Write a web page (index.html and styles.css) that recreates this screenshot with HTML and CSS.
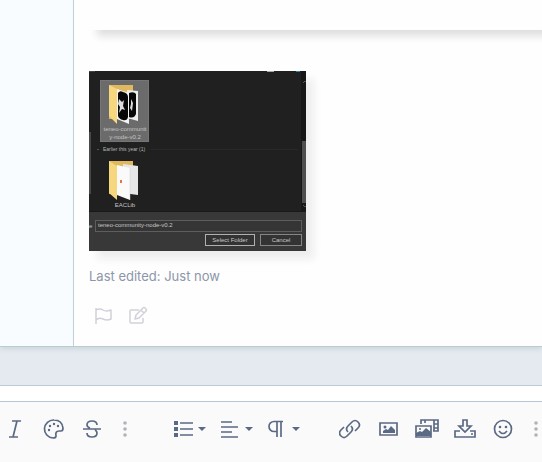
FILE: index.html
```html
<!DOCTYPE html>
<html lang="en">
<head>
<meta charset="utf-8">
<title>Forum thread</title>
<link rel="stylesheet" href="styles.css">
</head>
<body>
<main>
  <article class="post">
    <aside class="post-author"></aside>
    <div class="post-body">
      <div class="attachment attachment-blank"></div>
      <svg class="attachment attachment-dialog" viewBox="0 0 217 180" role="img" aria-label="Select folder dialog">
        <rect width="217" height="180" fill="#202020"/>
        <path d="M0 .5h6" stroke="#444"/>
        <path d="M178 .5h7" stroke="#aaa"/>
        <path d="M207 .5h4" stroke="#2785a8"/>
        <rect y="61" width="2" height="62" fill="#484848"/>
        <rect x="212" width="5" height="140" fill="#171717"/>
        <rect x="213" y="70" width="4" height="62" fill="#4e4e4e"/>
        <path d="M214 12l2-2 1 1M214 134l2 2 1-1" fill="none" stroke="#555"/>
        <rect x="11.500" y="9.500" width="48" height="61" fill="#6b6b6b" stroke="#767676"/>
        <path d="M20 14h24v34H20z" fill="#dfb85f"/>
        <path d="M38 19l11 1v30l-11-3z" fill="#eee"/>
        <path d="M40 22q5-2 7 1v20q-2 5-7 3z" fill="#080808"/>
        <path d="M28 18l12 4v31l-12-5z" fill="#f4f4f4"/>
        <path d="M29 22q2-3 5-1 5 1 5 5v20q-1 4-5 3-4-1-5-4z" fill="#080808"/>
        <path d="M30 28l3 3 2-2-1 6 2 4-3-1-3 4 1-6-2-3zM42 28l2 4-1 8-2-3 1-4z" fill="#ddd"/>
        <path d="M20 14l8 4v35l-8-8z" fill="#f6d77e"/>
        <g class="caption" text-anchor="middle">
          <text x="36" y="60">teneo-communit</text>
          <text x="36" y="68">y-node-v0.2</text>
          <text x="36" y="136">EACLib</text>
        </g>
        <path d="M8 78l1 1 1-1" fill="none" stroke="#555"/>
        <text class="group-name" x="14" y="80">Earlier this year (1)</text>
        <path d="M62 78.500h147" stroke="#292929"/>
        <path d="M20 90h24v33H20z" fill="#dfb85f"/>
        <path d="M34 93l15 2v29l-15-2z" fill="#e6e6e6"/>
        <path d="M28 94l13 3v32l-13-5z" fill="#fafafa"/>
        <path d="M41 97v32" stroke="#ccc" stroke-width=".500"/>
        <path d="M20 90l8 5v34l-8-7z" fill="#f6d77e"/>
        <path d="M31 109h2v3h-2z" fill="#e4763e"/>
        <rect y="140" width="217" height="40" fill="#383838"/>
        <path d="M0 140.500h217" stroke="#191919"/>
        <text class="field-text" x="0" y="157">e</text>
        <rect x="6.500" y="149.500" width="206" height="11" fill="#353535" stroke="#5e5e5e"/>
        <text class="field-text" x="9" y="156">teneo-community-node-v0.2</text>
        <rect x="116.500" y="163.500" width="49" height="11" fill="#333" stroke="#b0b0b0"/>
        <rect x="171.500" y="163.500" width="41" height="11" fill="#333" stroke="#858585"/>
        <g class="field-text" text-anchor="middle">
          <text x="141" y="171">Select Folder</text>
          <text x="192" y="171">Cancel</text>
        </g>
      </svg>
      <p class="edited">Last edited: Just now</p>
      <div class="post-actions">
        <button type="button" aria-label="Report">
          <svg viewBox="0 0 20 20"><path d="M3 2v16M3 4q4-2 7 0t8 0v9q-4 2-8 0t-7 1"/></svg>
        </button>
        <button type="button" aria-label="Edit">
          <svg viewBox="0 0 20 20"><path d="M11 4H3q-1 0-1 1v11q0 1 1 1h11q1 0 1-1v-4M7 13l1-4 7-7q1-1 2 0l1 1q1 1 0 2l-7 7zM13 4l3 3"/></svg>
        </button>
      </div>
    </div>
  </article>

  <section class="editor" aria-label="Reply">
    <div class="toolbar" role="toolbar" aria-label="Formatting">
      <div class="tools">
        <button class="tool" type="button" aria-label="Italic">
          <svg viewBox="0 0 24 24"><path d="M8 4h9M5 20h9M13 4L9 20"/></svg>
        </button>
        <button class="tool" type="button" aria-label="Text color">
          <svg viewBox="0 0 24 24"><path d="M12 3a9 9 0 0 0-1 18q3 0 3-2-1-5 3-5h2q2 0 2-3-1-8-9-8z"/><g class="solid"><circle cx="7" cy="13" r="1.200"/><circle cx="8" cy="9" r="1.200"/><circle cx="12" cy="7" r="1.200"/><circle cx="16" cy="9" r="1.200"/></g></svg>
        </button>
        <button class="tool" type="button" aria-label="Strike-through">
          <svg viewBox="0 0 24 24"><path d="M3 12h18M17 8q0-4-5-4-5 0-5 4 0 2 3 3M7 16q0 4 5 4 5 0 5-4 0-2-2-3"/></svg>
        </button>
        <button class="tool more" type="button" aria-label="More text options">
          <svg viewBox="0 0 24 24"><circle cx="12" cy="6" r="1.800"/><circle cx="12" cy="12" r="1.800"/><circle cx="12" cy="18" r="1.800"/></svg>
        </button>
      </div>
      <div class="tools">
        <button class="tool menu" type="button" aria-label="List">
          <svg viewBox="0 0 24 24"><path d="M9 6h13M9 12h13M9 18h13"/><path class="solid" d="M3 4h4v4H3zM3 10h4v4H3zM3 16h4v4H3z"/></svg>
          <span class="caret"></span>
        </button>
        <button class="tool menu" type="button" aria-label="Align">
          <svg viewBox="0 0 24 24"><path d="M3 5h11M3 10h17M3 15h11M3 20h17"/></svg>
          <span class="caret"></span>
        </button>
        <button class="tool menu" type="button" aria-label="Paragraph format">
          <svg viewBox="0 0 24 24"><path d="M18 4.500H9a4.500 4.500 0 0 0 0 10h3M12 4v16M16 4v16"/></svg>
          <span class="caret"></span>
        </button>
      </div>
      <div class="tools">
        <button class="tool" type="button" aria-label="Insert link">
          <svg viewBox="0 0 24 24"><path d="M9 15q-3-3 0-6l4-4q3-3 6 0t0 6l-3 3M12 9q3 3 0 6l-4 4q-3 3-6 0t0-6l3-3"/></svg>
        </button>
        <button class="tool" type="button" aria-label="Insert image">
          <svg viewBox="0 0 24 24"><path d="M3 6h17v12H3z"/><path class="solid" d="M6 16v-2l3-2 2 1 3-4 4 4v3z"/><circle class="solid" cx="8" cy="10" r="1.500"/></svg>
        </button>
        <button class="tool" type="button" aria-label="Insert gallery">
          <svg viewBox="0 0 24 24"><path d="M1 9h15v11H1zM6 7V3h17v11h-5M19 3v11M19 7h4M19 11h4M10 3v3"/><path class="solid" d="M1 19v-3l4-2 2 1 4-4 5 4v4z"/><circle class="solid" cx="5" cy="12" r="1"/></svg>
        </button>
        <button class="tool" type="button" aria-label="Insert file">
          <svg viewBox="0 0 24 24"><path d="M10 3h4v6h4l-6 6-6-6h4zM7 14H2v6h20v-6h-5"/><circle class="solid" cx="19" cy="17" r="1"/></svg>
        </button>
        <button class="tool" type="button" aria-label="Smilies">
          <svg viewBox="0 0 24 24"><circle cx="12" cy="12" r="8.500"/><path d="M8 14q4 5 8 0"/><g class="solid"><circle cx="9" cy="10" r="1.300"/><circle cx="15" cy="10" r="1.300"/></g></svg>
        </button>
        <button class="tool more" type="button" aria-label="More insert options">
          <svg viewBox="0 0 24 24"><circle cx="12" cy="6" r="1.800"/><circle cx="12" cy="12" r="1.800"/><circle cx="12" cy="18" r="1.800"/></svg>
        </button>
      </div>
    </div>
  </section>
</main>
</body>
</html>
```
FILE: styles.css
```css
* {
  box-sizing: border-box;
}

body {
  margin: 0;
  background: #e5eaf1;
  font-family: Inter, "Liberation Sans", sans-serif;
  overflow: hidden;
}

main {
  display: flex;
  flex-direction: column;
  gap: 38px;
  min-height: 100vh;
}

button {
  padding: 0;
  border: 0;
  background: none;
  font: inherit;
  color: inherit;
}

svg {
  display: block;
}

.post {
  display: flex;
  background: #fefefe;
  border-bottom: 1px solid #b8cdd1;
  box-shadow: 0 2px 5px #cbd6d8;
}

.post-author {
  flex: 0 0 74px;
  background: #f9fcfe;
  border-right: 1px solid #bdd2d8;
}

.post-body {
  flex: 1;
  min-width: 0;
  padding: 0 0 20px 15px;
}

.attachment {
  box-shadow: 8px 8px 8px #eeeeee;
}

.attachment-blank {
  height: 30px;
  margin-bottom: 41px;
  background: #fefefe;
  box-shadow: 8px 6px 8px #dedede;
}

.attachment-dialog {
  width: 217px;
  height: 180px;
  font-family: "Liberation Sans", sans-serif;
}

.caption {
  font-size: 6px;
  fill: #c4c4c4;
}

.group-name {
  font-size: 5px;
  fill: #b5b5b5;
}

.field-text {
  font-size: 6px;
  fill: #c8c8c8;
}

.edited {
  margin: 15px 0 20px;
  font-size: 13px;
  line-height: 20px;
  color: #8c96a9;
}

.post-actions {
  display: flex;
  gap: 15px;
  padding-left: 4px;
}

.post-actions svg {
  width: 20px;
  height: 20px;
  fill: none;
  stroke: #cfd2d8;
  stroke-width: 1.5;
  stroke-linejoin: round;
}

.editor {
  flex: 1;
  display: flex;
  flex-direction: column;
  padding-top: 15px;
  background: #ffffff;
  border-top: 1px solid #b9ced6;
}

.toolbar {
  flex: 1;
  display: flex;
  align-items: flex-start;
  gap: 26px;
  margin-left: -3px;
  padding-top: 8px;
  background: #fafafa;
  border-top: 1px solid #b5c9d5;
  color: #5b6a84;
}

.tools {
  display: flex;
}

.tool {
  display: flex;
  flex: none;
  align-items: center;
  justify-content: center;
  width: 38px;
  height: 38px;
}

.tool svg {
  width: 24px;
  height: 24px;
  fill: none;
  stroke: currentColor;
  stroke-width: 1.7;
}

.tool .solid {
  fill: currentColor;
  stroke: none;
}

.menu {
  justify-content: flex-start;
  gap: 3px;
  width: 47px;
  padding-left: 6px;
}

.caret {
  border: 4px solid transparent;
  border-top-color: currentColor;
  border-bottom: 0;
}

.more {
  width: 28px;
  color: #b0b3b8;
}

.tool.more svg {
  fill: currentColor;
  stroke: none;
}
```
